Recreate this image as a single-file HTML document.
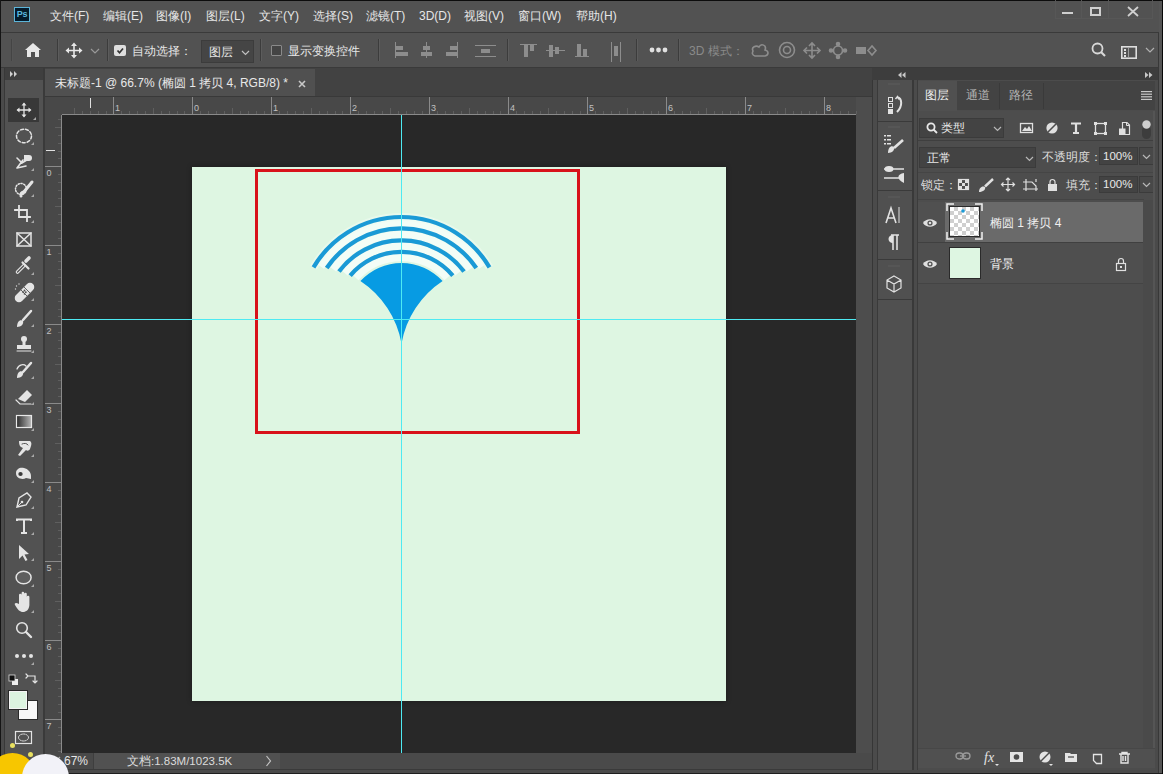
<!DOCTYPE html>
<html><head><meta charset="utf-8">
<style>
*{box-sizing:border-box;margin:0;padding:0}
html,body{width:1163px;height:774px;overflow:hidden;background:#3a3a3a;font-family:"Liberation Sans",sans-serif;color:#dcdcdc;font-size:12px}
.a{position:absolute}
.t{position:absolute;white-space:nowrap;line-height:14px}
#menubar{left:1px;top:1px;width:1158px;height:31px;background:#525252}
#menubar .t{top:8px;color:#e6e6e6}
#opts{left:1px;top:33px;width:1158px;height:34px;background:#525252}
#toolbar{left:5px;top:68px;width:38px;height:702px;background:#525252}
#tabbar{left:45px;top:68px;width:827px;height:29px;background:#424242}
#tab{left:45px;top:69px;width:270px;height:28px;background:#505050}
#hruler{left:45px;top:97px;width:811px;height:18px;background:#484848}
#vruler{left:45px;top:115px;width:17px;height:638px;background:#484848}
#paste{left:62px;top:115px;width:794px;height:638px;background:#282828}
#doc{left:192px;top:167px;width:534px;height:534px;background:#def6e2;box-shadow:0 0 5px rgba(0,0,0,0.35)}
#rstrip{left:856px;top:97px;width:16px;height:656px;background:#4d4d4d}
#status{left:45px;top:753px;width:827px;height:16px;background:#4a4a4a}
#iconpanel{left:873px;top:68px;width:41px;height:702px;background:#474747}
#layers{left:915px;top:68px;width:244px;height:702px;background:#4c4c4c}
.sep{position:absolute;top:6px;width:2px;height:22px;border-left:1px solid #3c3c3c;border-right:1px solid #5c5c5c}
svg{position:absolute;overflow:visible}
</style></head><body>
<div class="a" style="left:0;top:0;width:1163px;height:1px;background:#0c0c0c"></div>
<div class="a" style="left:0;top:0;width:1px;height:774px;background:#151515"></div>
<!-- MENU BAR -->
<div class="a" id="menubar">
  <div class="a" style="left:13px;top:6px;width:16px;height:15px;background:#041a2a;border:1px solid #5cb4d8;color:#5ab6de;font-size:9px;font-weight:bold;line-height:13px;text-align:center;letter-spacing:-0.3px">Ps</div>
  <span class="t" style="left:49px">文件(F)</span>
  <span class="t" style="left:102px">编辑(E)</span>
  <span class="t" style="left:155px">图像(I)</span>
  <span class="t" style="left:205px">图层(L)</span>
  <span class="t" style="left:258px">文字(Y)</span>
  <span class="t" style="left:312px">选择(S)</span>
  <span class="t" style="left:365px">滤镜(T)</span>
  <span class="t" style="left:418px">3D(D)</span>
  <span class="t" style="left:463px">视图(V)</span>
  <span class="t" style="left:517px">窗口(W)</span>
  <span class="t" style="left:575px">帮助(H)</span>
  <div class="a" style="left:1054px;top:-1px;width:27px;height:19px;border:1px solid #575757;border-top:none"></div>
  <div class="a" style="left:1080px;top:-1px;width:28px;height:19px;border:1px solid #575757;border-top:none"></div>
  <div class="a" style="left:1107px;top:-1px;width:45px;height:19px;border:1px solid #575757;border-top:none"></div>
  <div class="a" style="left:1061px;top:11px;width:11px;height:2px;background:#cfcfcf"></div>
  <div class="a" style="left:1089px;top:6px;width:11px;height:9px;border:2px solid #cfcfcf"></div>
  <svg style="left:1126px;top:5px" width="12" height="11"><path d="M1,1 L11,10 M11,1 L1,10" stroke="#d0d0d0" stroke-width="1.8"/></svg>
</div>
<!-- OPTIONS BAR -->
<div class="a" id="opts">
  <div class="sep" style="left:10px;border-left-color:#444;border-right-color:#555"></div>
  <svg style="left:23px;top:9px" width="18" height="16"><path d="M9,1 L1,8 L3,8 L3,15 L7,15 L7,10 L11,10 L11,15 L15,15 L15,8 L17,8 Z" fill="#e8e8e8"/></svg>
  <div class="sep" style="left:56px"></div>
  <svg style="left:64px;top:9px" width="18" height="17"><path d="M9,3 V14 M3,8.5 H15" stroke="#e8e8e8" stroke-width="1.6"/><path d="M9,0.5 L12,4 H6 Z M9,16.5 L12,13 H6 Z M0.5,8.5 L4,5.5 V11.5 Z M17.5,8.5 L14,5.5 V11.5 Z" fill="#e8e8e8"/></svg>
  <svg style="left:89px;top:15px" width="10" height="6"><path d="M1,1 L5,5 L9,1" stroke="#9a9a9a" stroke-width="1.2" fill="none"/></svg>
  <div class="sep" style="left:106px"></div>
  <div class="a" style="left:113px;top:12px;width:12px;height:11px;background:#dedede;border-radius:2px"></div>
  <svg style="left:114px;top:13px" width="10" height="9"><path d="M2.5,4.5 L4.5,6.8 L8,2.5" stroke="#333" stroke-width="1.7" fill="none"/></svg>
  <span class="t" style="left:131px;top:11px;color:#e6e6e6">自动选择：</span>
  <div class="a" style="left:200px;top:7px;width:53px;height:23px;background:#454545;border:1px solid #3c3c3c"></div>
  <span class="t" style="left:208px;top:12px;color:#e6e6e6">图层</span>
  <svg style="left:240px;top:17px" width="9" height="6"><path d="M1,1 L4.5,4.5 L8,1" stroke="#c0c0c0" stroke-width="1.2" fill="none"/></svg>
  <div class="sep" style="left:259px"></div>
  <div class="a" style="left:270px;top:12px;width:11px;height:11px;border:1px solid #8a8a8a;background:#444;border-radius:1px"></div>
  <span class="t" style="left:287px;top:11px;color:#e6e6e6">显示变换控件</span>
  <div class="sep" style="left:377px"></div>
  <!-- align icons -->
  <svg style="left:393px;top:8px" width="110" height="20" fill="#8d8d8d" stroke="none">
    <rect x="1" y="1" width="1" height="16"/><rect x="2" y="5" width="7" height="4"/><rect x="2" y="11" width="12" height="4"/>
    <rect x="32" y="1" width="1" height="16"/><rect x="29" y="5" width="7" height="4"/><rect x="27" y="11" width="11" height="4"/>
    <rect x="63" y="1" width="1" height="16"/><rect x="56" y="5" width="7" height="4"/><rect x="52" y="11" width="11" height="4"/>
    <rect x="81" y="4" width="21" height="1"/><rect x="81" y="15" width="21" height="1"/><rect x="87" y="8" width="9" height="4"/>
  </svg>
  <div class="sep" style="left:506px"></div>
  <svg style="left:518px;top:8px" width="110" height="22" fill="#8d8d8d">
    <rect x="1" y="3" width="17" height="1"/><rect x="5" y="4" width="4" height="12"/><rect x="11" y="4" width="4" height="6"/>
    <rect x="27" y="9" width="19" height="1"/><rect x="30" y="4" width="4" height="12"/><rect x="36" y="6" width="4" height="7"/>
    <rect x="56" y="15" width="14" height="1"/><rect x="58" y="3" width="4" height="12"/><rect x="64" y="8" width="4" height="7"/>
    <rect x="92" y="1" width="1" height="20"/><rect x="101" y="1" width="1" height="20"/><rect x="95" y="5" width="4" height="10"/>
  </svg>
  <div class="sep" style="left:635px"></div>
  <svg style="left:648px;top:14px" width="20" height="6" fill="#e0e0e0"><circle cx="3" cy="3" r="2.4"/><circle cx="9.5" cy="3" r="2.4"/><circle cx="16" cy="3" r="2.4"/></svg>
  <div class="sep" style="left:677px"></div>
  <span class="t" style="left:688px;top:11px;color:#8a8a8a">3D 模式：</span>
  <svg style="left:749px;top:9px" width="130" height="18" fill="none" stroke="#8d8d8d" stroke-width="1.6">
    <path d="M3,9 C1,5 6,3 9,5 C11,1 17,3 15,8 C19,9 19,13 15,14 L5,14 C2,13 2,11 3,9 Z"/>
    <circle cx="37" cy="8" r="7.5"/><circle cx="37" cy="8" r="3.5"/>
    <path d="M62,1 V16 M54,8.5 H70 M59,4 L62,1 L65,4 M59,13 L62,16 L65,13 M57,5.5 L54,8.5 L57,11.5 M67,5.5 L70,8.5 L67,11.5"/>
    <circle cx="88" cy="8.5" r="4.5"/><circle cx="88" cy="2" r="1.5" fill="#8d8d8d"/><circle cx="88" cy="15" r="1.5" fill="#8d8d8d"/><circle cx="81" cy="8.5" r="1.5" fill="#8d8d8d"/><circle cx="95" cy="8.5" r="1.5" fill="#8d8d8d"/>
    <rect x="106" y="5" width="10" height="7" fill="#8d8d8d" stroke="none"/><path d="M122,4 L118,8.5 L122,13 L126,8.5 Z"/>
  </svg>
  <svg style="left:1090px;top:9px" width="18" height="19" fill="none" stroke="#d8d8d8" stroke-width="1.8"><circle cx="6.5" cy="6.5" r="5"/><path d="M10,10 L14,14" stroke-width="2.2"/></svg>
  <svg style="left:1119px;top:12px" width="18" height="15"><rect x="1.8" y="1.8" width="14.4" height="11.4" fill="none" stroke="#dedede" stroke-width="1.6"/><rect x="4" y="4" width="2" height="2" fill="#dedede"/><rect x="4" y="7" width="2" height="2" fill="#dedede"/><rect x="4" y="10" width="2" height="2" fill="#dedede"/><rect x="8" y="3" width="1" height="9" fill="#9a9a9a"/></svg>
  <svg style="left:1144px;top:14px" width="10" height="6"><path d="M1,1 L5,5 L9,1" stroke="#b0b0b0" stroke-width="1.2" fill="none"/></svg>
</div>

<!-- TOOLBAR -->
<div class="a" style="left:1px;top:68px;width:3px;height:702px;background:#4a4a4a"></div><div class="a" style="left:4px;top:68px;width:1px;height:702px;background:#383838"></div>
<div class="a" id="toolbar"></div>
<div class="a" style="left:5px;top:68px;width:38px;height:12px;background:#3f3f3f"></div>
<svg style="left:10px;top:71px" width="10" height="6" fill="#d0d0d0"><path d="M0,0 L3,3 L0,6 Z M4,0 L7,3 L4,6 Z"/></svg>
<div class="a" style="left:8px;top:98px;width:31px;height:24px;background:#383838"></div>
<svg style="left:0;top:0" width="45" height="774" fill="none" stroke="#e4e4e4" stroke-width="1.5" stroke-linecap="round">
  <g fill="#a8a8a8" stroke="none">
    <path d="M36,117 L36,120 L33,120 Z"/><path d="M34,142 L34,145 L31,145 Z"/><path d="M34,168 L34,171 L31,171 Z"/>
    <path d="M34,194 L34,197 L31,197 Z"/><path d="M34,220 L34,223 L31,223 Z"/><path d="M34,272 L34,275 L31,275 Z"/>
    <path d="M34,298 L34,301 L31,301 Z"/><path d="M34,324 L34,327 L31,327 Z"/><path d="M34,350 L34,353 L31,353 Z"/>
    <path d="M34,376 L34,379 L31,379 Z"/><path d="M34,402 L34,405 L31,405 Z"/><path d="M34,428 L34,431 L31,431 Z"/>
    <path d="M34,454 L34,457 L31,457 Z"/><path d="M34,480 L34,483 L31,483 Z"/><path d="M34,506 L34,509 L31,509 Z"/>
    <path d="M34,532 L34,535 L31,535 Z"/><path d="M34,558 L34,561 L31,561 Z"/><path d="M34,584 L34,587 L31,587 Z"/>
    <path d="M34,610 L34,613 L31,613 Z"/><path d="M34,662 L34,665 L31,665 Z"/>
  </g>
  <!-- move -->
  <path d="M24,104 V116 M18,110 H30" stroke-width="1.3"/><path d="M24,102.5 L26.5,105.5 H21.5 Z M24,117.5 L26.5,114.5 H21.5 Z M16.5,110 L19.5,107.5 V112.5 Z M31.5,110 L28.5,107.5 V112.5 Z" fill="#e4e4e4" stroke="none"/>
  <!-- marquee -->
  <ellipse cx="24" cy="136" rx="7.5" ry="6.8" stroke-dasharray="3 2"/>
  <!-- lasso magnetic -->
  <path d="M17,168 L23,160 M17,168 L26,166 M17,158 L22,163 L30,158" stroke-width="1.6"/><path d="M24,155 h5 a3,3 0 0 1 0,6 h-5 z" fill="#e4e4e4" stroke="none"/>
  <!-- quick select -->
  <circle cx="21" cy="189" r="5.5" stroke-dasharray="1.2 1.6"/><path d="M23,193 L32,182" stroke-width="3"/><path d="M21,196 a3,3 0 0 1 3,-4" stroke-width="3"/>
  <!-- crop -->
  <path d="M19,206 V217 H30 M15,210 H27 V221" stroke-width="1.8" stroke-linecap="square"/>
  <!-- frame -->
  <rect x="17" y="233" width="14" height="13"/><path d="M17,233 L31,246 M31,233 L17,246"/>
  <!-- eyedropper -->
  <path d="M17.5,272 L24,265.5" stroke-width="3.6"/><path d="M17.5,272 L24,265.5" stroke="#525252" stroke-width="1.3"/><path d="M22.5,262.5 L28.5,268.5" stroke-width="2.2"/><path d="M26,261 L29,258" stroke-width="3.6"/>
  <!-- healing -->
  <path d="M16,295 L27,284 a4,4 0 0 1 6,6 L22,301 a4,4 0 0 1 -6,-6 z" fill="#e4e4e4" stroke="none"/>
  <path d="M19.5,288.5 L28.5,297.5 M22.5,285.5 L31.5,294.5" stroke="#525252" stroke-width="0.9"/>
  <g fill="#525252" stroke="none"><circle cx="23.2" cy="292.2" r="0.9"/><circle cx="25.8" cy="292.2" r="0.9"/><circle cx="24.5" cy="290.5" r="0.9"/><circle cx="24.5" cy="293.8" r="0.9"/></g>
  <g fill="#d8d8d8" stroke="none"><circle cx="16.5" cy="286" r="0.7"/><circle cx="19" cy="284" r="0.7"/><circle cx="15.5" cy="289" r="0.7"/></g>
  <!-- brush -->
  <path d="M23,320 L31,311" stroke-width="2.5"/><path d="M17,327 C17,322 20,319 23,321 C24,324 21,327 17,327 Z" fill="#e4e4e4" stroke="none"/>
  <!-- stamp -->
  <circle cx="24" cy="339" r="3" fill="#e4e4e4" stroke="none"/><rect x="22.5" y="341" width="3" height="4" fill="#e4e4e4" stroke="none"/><rect x="17" y="345" width="14" height="4" fill="#e4e4e4" stroke="none"/><path d="M17,351 H31" stroke-width="1"/>
  <!-- history brush -->
  <path d="M17,369 C19,364 24,364 26,366" stroke-width="1.3"/><path d="M23,372 L31,363" stroke-width="2.5"/><path d="M17,378 C17,373 20,370 23,372 C24,375 21,378 17,378 Z" fill="#e4e4e4" stroke="none"/>
  <!-- eraser -->
  <path d="M18,399 L27,390 L32,395 L25,402 Z" fill="#e4e4e4" stroke="none"/><path d="M16,400 L20,404 H31" stroke-width="1.2"/>
  <!-- gradient -->
  <defs><linearGradient id="gr" x1="0" x2="1"><stop offset="0" stop-color="#2a2a2a"/><stop offset="1" stop-color="#b8b8b8"/></linearGradient></defs>
  <rect x="16.5" y="415.5" width="15" height="12" fill="url(#gr)" stroke="#e8e8e8" stroke-width="1.2"/>
  <!-- blur -->
  <path d="M19,441 H29 C31,441 32,443 31,446 L30,449 C29,451 27,451 26,450 L20,456 L18,455 L23,448 C20,447 19,445 19,441 Z" fill="#e4e4e4" stroke="none"/>
  <path d="M22,444 C24,443 27,443 28,445" stroke="#525252" stroke-width="1"/>
  <!-- dodge -->
  <path d="M16,473 C16,469 20,467 24,468 C28,469 31,472 31,476 L31,479 L26,478 C23,480 16,479 16,473 Z" fill="#e4e4e4" stroke="none"/><ellipse cx="20.5" cy="474" rx="2.2" ry="2" fill="#3a3a3a" stroke="none"/>
  <!-- pen -->
  <path d="M17,507 L19,498 L27,493 L31,497 L26,505 Z" stroke-width="1.4"/><circle cx="22" cy="502" r="1.3" fill="#e4e4e4" stroke="none"/><path d="M17,507 L22,502" stroke-width="1"/>
  <!-- type -->
  <path d="M17,521 V519.5 H31 V521 M24,519.5 V533 M21,533 H27" stroke-width="2" stroke-linecap="butt"/>
  <!-- path select -->
  <path d="M19,545 L19,559 L22.5,555.5 L25.5,561 L27.5,560 L24.5,554.5 L29,554 Z" fill="#e4e4e4" stroke="none"/>
  <!-- ellipse -->
  <ellipse cx="23.6" cy="577.5" rx="7.5" ry="6.3" fill="#5e5e5e" stroke-width="1.5"/>
  <!-- hand -->
  <path d="M19,604 V595 a1.3,1.3 0 0 1 2.6,0 V601 V593 a1.3,1.3 0 0 1 2.6,0 V601 V594 a1.3,1.3 0 0 1 2.6,0 V602 V597 a1.3,1.3 0 0 1 2.6,0 V605 C29,610 26,612 23,612 C20,612 18,610 15,605 C14,603 16,602 19,604 Z" fill="#e4e4e4" stroke="none"/>
  <!-- zoom -->
  <circle cx="22" cy="628" r="5.3" stroke-width="1.6"/><path d="M26,632 L31,637" stroke-width="2.4"/>
  <!-- dots -->
  <g fill="#e4e4e4" stroke="none"><circle cx="17" cy="656" r="2"/><circle cx="24" cy="656" r="2"/><circle cx="31" cy="656" r="2"/></g>
  <!-- default colors -->
  <rect x="12" y="679" width="6" height="6" fill="#f0f0f0" stroke="none"/><rect x="9" y="675" width="6" height="6" fill="#111" stroke="#ddd" stroke-width="0.8"/>
  <path d="M28,676 H35 V683 M26,678 L28,676 L26,674 M33,681 L35,683 L37,681" stroke-width="1.2"/>
  <!-- fg/bg -->
  <rect x="18.5" y="700.5" width="19" height="19" fill="#f7f7f7" stroke="#2a2a2a" stroke-width="1"/>
  <rect x="8.5" y="690.5" width="19" height="19" fill="#dcf4e0" stroke="#2a2a2a" stroke-width="1"/>
  <rect x="9.5" y="691.5" width="17" height="17" fill="none" stroke="#f4f4f4" stroke-width="1"/>
  <!-- quick mask -->
  <rect x="15.5" y="731.5" width="16" height="12" stroke-width="1.2"/><ellipse cx="23.5" cy="737.5" rx="5" ry="3.5" stroke-dasharray="1 1.2" stroke-width="1"/>
</svg>

<!-- DOCUMENT TAB + RULERS -->
<div class="a" id="tabbar"></div>
<div class="a" id="tab"></div>
<span class="t" style="left:55px;top:76px;color:#e8e8e8;font-size:12px">未标题-1 @ 66.7% (椭圆 1 拷贝 4, RGB/8) *</span>
<svg style="left:298px;top:80px" width="8" height="8"><path d="M1,1 L7,7 M7,1 L1,7" stroke="#c8c8c8" stroke-width="1.6"/></svg>
<div class="a" id="hruler"></div>
<div class="a" style="left:45px;top:96px;width:827px;height:1px;background:#393939"></div>
<div class="a" id="vruler"></div>
<div class="a" id="paste"></div>
<div class="a" id="rstrip"></div>
<div class="a" id="status"></div>
<div class="a" id="doc"></div>

<svg style="left:0;top:0" width="1163" height="774" fill="#5f5f5f" font-family="Liberation Sans" font-size="9"><rect x="74" y="108" width="1" height="6"/><rect x="82" y="111" width="1" height="3"/><rect x="90" y="111" width="1" height="3"/><rect x="98" y="111" width="1" height="3"/><rect x="106" y="111" width="1" height="3"/><rect x="113" y="97" width="1" height="17" fill="#8a8a8a"/><text x="115" y="111" fill="#c0c0c0">1</text><rect x="121" y="111" width="1" height="3"/><rect x="129" y="111" width="1" height="3"/><rect x="137" y="111" width="1" height="3"/><rect x="145" y="111" width="1" height="3"/><rect x="153" y="108" width="1" height="6"/><rect x="161" y="111" width="1" height="3"/><rect x="169" y="111" width="1" height="3"/><rect x="177" y="111" width="1" height="3"/><rect x="184" y="111" width="1" height="3"/><rect x="192" y="97" width="1" height="17" fill="#8a8a8a"/><text x="194" y="111" fill="#c0c0c0">0</text><rect x="200" y="111" width="1" height="3"/><rect x="208" y="111" width="1" height="3"/><rect x="216" y="111" width="1" height="3"/><rect x="224" y="111" width="1" height="3"/><rect x="232" y="108" width="1" height="6"/><rect x="240" y="111" width="1" height="3"/><rect x="248" y="111" width="1" height="3"/><rect x="256" y="111" width="1" height="3"/><rect x="264" y="111" width="1" height="3"/><rect x="271" y="97" width="1" height="17" fill="#8a8a8a"/><text x="273" y="111" fill="#c0c0c0">1</text><rect x="279" y="111" width="1" height="3"/><rect x="287" y="111" width="1" height="3"/><rect x="295" y="111" width="1" height="3"/><rect x="303" y="111" width="1" height="3"/><rect x="311" y="108" width="1" height="6"/><rect x="319" y="111" width="1" height="3"/><rect x="327" y="111" width="1" height="3"/><rect x="335" y="111" width="1" height="3"/><rect x="342" y="111" width="1" height="3"/><rect x="350" y="97" width="1" height="17" fill="#8a8a8a"/><text x="352" y="111" fill="#c0c0c0">2</text><rect x="358" y="111" width="1" height="3"/><rect x="366" y="111" width="1" height="3"/><rect x="374" y="111" width="1" height="3"/><rect x="382" y="111" width="1" height="3"/><rect x="390" y="108" width="1" height="6"/><rect x="398" y="111" width="1" height="3"/><rect x="406" y="111" width="1" height="3"/><rect x="414" y="111" width="1" height="3"/><rect x="422" y="111" width="1" height="3"/><rect x="429" y="97" width="1" height="17" fill="#8a8a8a"/><text x="431" y="111" fill="#c0c0c0">3</text><rect x="437" y="111" width="1" height="3"/><rect x="445" y="111" width="1" height="3"/><rect x="453" y="111" width="1" height="3"/><rect x="461" y="111" width="1" height="3"/><rect x="469" y="108" width="1" height="6"/><rect x="477" y="111" width="1" height="3"/><rect x="485" y="111" width="1" height="3"/><rect x="493" y="111" width="1" height="3"/><rect x="500" y="111" width="1" height="3"/><rect x="508" y="97" width="1" height="17" fill="#8a8a8a"/><text x="510" y="111" fill="#c0c0c0">4</text><rect x="516" y="111" width="1" height="3"/><rect x="524" y="111" width="1" height="3"/><rect x="532" y="111" width="1" height="3"/><rect x="540" y="111" width="1" height="3"/><rect x="548" y="108" width="1" height="6"/><rect x="556" y="111" width="1" height="3"/><rect x="564" y="111" width="1" height="3"/><rect x="572" y="111" width="1" height="3"/><rect x="580" y="111" width="1" height="3"/><rect x="587" y="97" width="1" height="17" fill="#8a8a8a"/><text x="589" y="111" fill="#c0c0c0">5</text><rect x="595" y="111" width="1" height="3"/><rect x="603" y="111" width="1" height="3"/><rect x="611" y="111" width="1" height="3"/><rect x="619" y="111" width="1" height="3"/><rect x="627" y="108" width="1" height="6"/><rect x="635" y="111" width="1" height="3"/><rect x="643" y="111" width="1" height="3"/><rect x="651" y="111" width="1" height="3"/><rect x="658" y="111" width="1" height="3"/><rect x="666" y="97" width="1" height="17" fill="#8a8a8a"/><text x="668" y="111" fill="#c0c0c0">6</text><rect x="674" y="111" width="1" height="3"/><rect x="682" y="111" width="1" height="3"/><rect x="690" y="111" width="1" height="3"/><rect x="698" y="111" width="1" height="3"/><rect x="706" y="108" width="1" height="6"/><rect x="714" y="111" width="1" height="3"/><rect x="722" y="111" width="1" height="3"/><rect x="730" y="111" width="1" height="3"/><rect x="738" y="111" width="1" height="3"/><rect x="745" y="97" width="1" height="17" fill="#8a8a8a"/><text x="747" y="111" fill="#c0c0c0">7</text><rect x="753" y="111" width="1" height="3"/><rect x="761" y="111" width="1" height="3"/><rect x="769" y="111" width="1" height="3"/><rect x="777" y="111" width="1" height="3"/><rect x="785" y="108" width="1" height="6"/><rect x="793" y="111" width="1" height="3"/><rect x="801" y="111" width="1" height="3"/><rect x="809" y="111" width="1" height="3"/><rect x="816" y="111" width="1" height="3"/><rect x="824" y="97" width="1" height="17" fill="#8a8a8a"/><text x="826" y="111" fill="#c0c0c0">8</text><rect x="832" y="111" width="1" height="3"/><rect x="840" y="111" width="1" height="3"/><rect x="848" y="111" width="1" height="3"/><rect x="856" y="111" width="1" height="3"/><rect x="58" y="119" width="3" height="1"/><rect x="55" y="127" width="6" height="1"/><rect x="58" y="135" width="3" height="1"/><rect x="58" y="143" width="3" height="1"/><rect x="58" y="151" width="3" height="1"/><rect x="58" y="158" width="3" height="1"/><rect x="45" y="166" width="16" height="1" fill="#8a8a8a"/><text x="46.5" y="176" fill="#c0c0c0">0</text><rect x="58" y="174" width="3" height="1"/><rect x="58" y="182" width="3" height="1"/><rect x="58" y="190" width="3" height="1"/><rect x="58" y="198" width="3" height="1"/><rect x="55" y="206" width="6" height="1"/><rect x="58" y="214" width="3" height="1"/><rect x="58" y="222" width="3" height="1"/><rect x="58" y="230" width="3" height="1"/><rect x="58" y="238" width="3" height="1"/><rect x="45" y="245" width="16" height="1" fill="#8a8a8a"/><text x="46.5" y="255" fill="#c0c0c0">1</text><rect x="58" y="253" width="3" height="1"/><rect x="58" y="261" width="3" height="1"/><rect x="58" y="269" width="3" height="1"/><rect x="58" y="277" width="3" height="1"/><rect x="55" y="285" width="6" height="1"/><rect x="58" y="293" width="3" height="1"/><rect x="58" y="301" width="3" height="1"/><rect x="58" y="309" width="3" height="1"/><rect x="58" y="316" width="3" height="1"/><rect x="45" y="324" width="16" height="1" fill="#8a8a8a"/><text x="46.5" y="334" fill="#c0c0c0">2</text><rect x="58" y="332" width="3" height="1"/><rect x="58" y="340" width="3" height="1"/><rect x="58" y="348" width="3" height="1"/><rect x="58" y="356" width="3" height="1"/><rect x="55" y="364" width="6" height="1"/><rect x="58" y="372" width="3" height="1"/><rect x="58" y="380" width="3" height="1"/><rect x="58" y="388" width="3" height="1"/><rect x="58" y="396" width="3" height="1"/><rect x="45" y="403" width="16" height="1" fill="#8a8a8a"/><text x="46.5" y="413" fill="#c0c0c0">3</text><rect x="58" y="411" width="3" height="1"/><rect x="58" y="419" width="3" height="1"/><rect x="58" y="427" width="3" height="1"/><rect x="58" y="435" width="3" height="1"/><rect x="55" y="443" width="6" height="1"/><rect x="58" y="451" width="3" height="1"/><rect x="58" y="459" width="3" height="1"/><rect x="58" y="467" width="3" height="1"/><rect x="58" y="474" width="3" height="1"/><rect x="45" y="482" width="16" height="1" fill="#8a8a8a"/><text x="46.5" y="492" fill="#c0c0c0">4</text><rect x="58" y="490" width="3" height="1"/><rect x="58" y="498" width="3" height="1"/><rect x="58" y="506" width="3" height="1"/><rect x="58" y="514" width="3" height="1"/><rect x="55" y="522" width="6" height="1"/><rect x="58" y="530" width="3" height="1"/><rect x="58" y="538" width="3" height="1"/><rect x="58" y="546" width="3" height="1"/><rect x="58" y="554" width="3" height="1"/><rect x="45" y="561" width="16" height="1" fill="#8a8a8a"/><text x="46.5" y="571" fill="#c0c0c0">5</text><rect x="58" y="569" width="3" height="1"/><rect x="58" y="577" width="3" height="1"/><rect x="58" y="585" width="3" height="1"/><rect x="58" y="593" width="3" height="1"/><rect x="55" y="601" width="6" height="1"/><rect x="58" y="609" width="3" height="1"/><rect x="58" y="617" width="3" height="1"/><rect x="58" y="625" width="3" height="1"/><rect x="58" y="632" width="3" height="1"/><rect x="45" y="640" width="16" height="1" fill="#8a8a8a"/><text x="46.5" y="650" fill="#c0c0c0">6</text><rect x="58" y="648" width="3" height="1"/><rect x="58" y="656" width="3" height="1"/><rect x="58" y="664" width="3" height="1"/><rect x="58" y="672" width="3" height="1"/><rect x="55" y="680" width="6" height="1"/><rect x="58" y="688" width="3" height="1"/><rect x="58" y="696" width="3" height="1"/><rect x="58" y="704" width="3" height="1"/><rect x="58" y="712" width="3" height="1"/><rect x="45" y="719" width="16" height="1" fill="#8a8a8a"/><text x="46.5" y="729" fill="#c0c0c0">7</text><rect x="58" y="727" width="3" height="1"/><rect x="58" y="735" width="3" height="1"/><rect x="58" y="743" width="3" height="1"/><rect x="58" y="751" width="3" height="1"/><rect x="62" y="114" width="794" height="1" fill="#8a8a8a"/><rect x="61" y="115" width="1" height="638" fill="#8a8a8a"/></svg>
<svg style="left:0;top:0" width="1163" height="774">
  <rect x="256.5" y="170.5" width="322" height="262" fill="none" stroke="#d8121a" stroke-width="3"/>
  <g fill="none" stroke="#f3fdf6" stroke-width="7.5">
    <path d="M320.8,266.6 A96.2,96.2 0 0 1 482.2,266.6"/>
    <path d="M333.1,269.3 A84.5,84.5 0 0 1 469.9,269.3"/>
    <path d="M344.8,273.1 A72.9,72.9 0 0 1 458.2,273.1"/>
    <path d="M355.7,277.8 A61.6,61.6 0 0 1 447.3,277.8"/>
  </g>
  <g fill="none" stroke="#eefcf2" stroke-width="8" opacity="0.6">
    <path d="M313.5,267.4 A102,102 0 0 1 489.5,267.4"/>
  </g>
  <g fill="none" stroke="#1a9ad6" stroke-width="4.2">
    <path d="M313.5,267.4 A102,102 0 0 1 489.5,267.4"/>
    <path d="M326.7,268.0 A90.5,90.5 0 0 1 476.3,268.0"/>
    <path d="M339.0,271.4 A78.6,78.6 0 0 1 464.0,271.4"/>
    <path d="M350.2,275.6 A67.2,67.2 0 0 1 452.8,275.6"/>
  </g>
  <path d="M360.4,281 A56,56 0 0 1 442.6,281 A95,95 0 0 0 401.5,343.5 A95,95 0 0 0 360.4,281 Z" fill="#079be3"/>
  <rect x="401" y="115" width="1" height="638" fill="#4eeaf2"/>
  <rect x="62" y="319" width="794" height="1" fill="#4eeaf2"/>
  <rect x="90" y="98" width="1" height="10" fill="#e0e0e0"/>
  <rect x="46" y="150" width="9" height="1" fill="#e0e0e0"/>
</svg>
<!-- RIGHT PANELS -->
<div class="a" id="iconpanel"></div>
<div class="a" id="layers"></div>
<!-- icon strip -->
<div class="a" style="left:872px;top:68px;width:287px;height:12px;background:#3d3d3d"></div>
<svg style="left:898px;top:72px" width="8" height="6" fill="#c8c8c8"><path d="M3.5,0 L0,3 L3.5,6 Z M7.5,0 L4,3 L7.5,6 Z"/></svg>
<div class="a" style="left:872px;top:80px;width:1px;height:690px;background:#363636"></div>
<div class="a" style="left:873px;top:80px;width:4px;height:690px;background:#4b4b4b"></div>
<div class="a" style="left:877px;top:80px;width:1px;height:690px;background:#3a3a3a"></div>
<div class="a" style="left:878px;top:80px;width:34px;height:690px;background:#505050"></div>
<div class="a" style="left:912px;top:80px;width:2px;height:690px;background:#393939"></div>
<div class="a" style="left:914px;top:80px;width:3px;height:690px;background:#4b4b4b"></div>
<div class="a" style="left:917px;top:80px;width:1px;height:690px;background:#3c3c3c"></div>
<div class="a" style="left:878px;top:121px;width:34px;height:1px;background:#3a3a3a"></div>
<div class="a" style="left:878px;top:190px;width:34px;height:1px;background:#3a3a3a"></div>
<div class="a" style="left:878px;top:259px;width:34px;height:1px;background:#3a3a3a"></div>
<div class="a" style="left:878px;top:299px;width:34px;height:1px;background:#3a3a3a"></div>
<svg style="left:876px;top:80px" width="36" height="230" fill="none" stroke="#e2e2e2" stroke-width="1.3">
  <g stroke="#5c5c5c" stroke-width="1"><path d="M12,4 H24 M12,47 H24 M12,117 H24 M12,186 H24"/></g>
  <!-- history -->
  <rect x="12.5" y="17.5" width="4" height="4" stroke-width="1"/><rect x="12.5" y="23.5" width="4" height="4" stroke-width="1"/><rect x="12" y="29" width="5" height="5" fill="#e2e2e2" stroke="none"/>
  <path d="M19.5,19 L21.5,16.5 L23,19.5" stroke-width="1.4"/><path d="M21.5,17.5 C26,18 27,26 21,32" stroke-width="2"/>
  <!-- brush presets -->
  <g fill="#e2e2e2" stroke="none"><rect x="8" y="55" width="2" height="1.5"/><rect x="11" y="55" width="4" height="1.5"/><rect x="8" y="59" width="2" height="1.5"/><rect x="11" y="59" width="4" height="1.5"/><rect x="8" y="63" width="2" height="1.5"/><rect x="11" y="63" width="4" height="1.5"/></g>
  <path d="M18,68 L27,60" stroke-width="2.6"/><path d="M12,73 C12,68 15,65 18,67 C19,70 16,73 12,73 Z" fill="#e2e2e2" stroke="none"/>
  <!-- brush settings -->
  <g transform="translate(0,2)"><path d="M8,87 H28 M8,96 H26" stroke-width="1.3"/><ellipse cx="13" cy="87" rx="4.5" ry="3" fill="#e2e2e2" stroke="none"/><path d="M28,91 C21,92 20,97 28,101 Z" fill="#e2e2e2" stroke="none"/></g>
  <!-- character -->
  <path d="M10,143 L15,128 L20,143 M12,138 H18" stroke-width="1.6"/><path d="M23,127 V143" stroke-width="1"/>
  <!-- paragraph -->
  <path d="M17,155 V170 M21,155 V170 M15,155 H23" stroke-width="1.6"/><path d="M17,155 C11,155 11,163 17,163 Z" fill="#e2e2e2" stroke="none"/>
  <!-- 3d -->
  <path d="M18,196 L25,200 V208 L18,212 L11,208 V200 Z M11,200 L18,204 L25,200 M18,204 V212" stroke-width="1.2"/>
</svg>

<!-- layers panel -->

<svg style="left:1145px;top:72px" width="8" height="6" fill="#c8c8c8"><path d="M0,0 L3.5,3 L0,6 Z M4,0 L7.5,3 L4,6 Z"/></svg>
<div class="a" style="left:957px;top:81px;width:201px;height:29px;background:#434343"></div>
<div class="a" style="left:918px;top:81px;width:39px;height:30px;background:#505050"></div>
<div class="a" style="left:999px;top:83px;width:1px;height:26px;background:#3a3a3a"></div>
<div class="a" style="left:1043px;top:83px;width:1px;height:26px;background:#3a3a3a"></div>
<span class="t" style="left:925px;top:88px;color:#eeeeee">图层</span>
<span class="t" style="left:966px;top:88px;color:#b4b4b4">通道</span>
<span class="t" style="left:1009px;top:88px;color:#b4b4b4">路径</span>
<svg style="left:1141px;top:91px" width="11" height="9" fill="#c8c8c8"><rect y="0" width="11" height="1.2"/><rect y="2.6" width="11" height="1.2"/><rect y="5.2" width="11" height="1.2"/><rect y="7.8" width="11" height="1.2"/></svg>
<div class="a" style="left:918px;top:111px;width:240px;height:657px;background:#4d4d4d"></div>
<!-- filter row -->
<div class="a" style="left:919px;top:118px;width:85px;height:20px;background:#434343;border:1px solid #3b3b3b"></div>
<svg style="left:926px;top:122px" width="12" height="12" fill="none" stroke="#e8e8e8" stroke-width="1.8"><circle cx="5" cy="5" r="3.6"/><path d="M7.5,7.5 L11,11"/></svg>
<span class="t" style="left:941px;top:121px;color:#e8e8e8">类型</span>
<svg style="left:993px;top:126px" width="9" height="6"><path d="M1,1 L4.5,4.5 L8,1" stroke="#b8b8b8" stroke-width="1.2" fill="none"/></svg>
<svg style="left:1018px;top:120px" width="140" height="20" fill="none" stroke="#e0e0e0" stroke-width="1.3">
  <rect x="2.5" y="3.5" width="12" height="9"/><path d="M4,11 L7,7 L9,9 L11,6 L14,11 Z" fill="#e0e0e0" stroke="none"/>
  <circle cx="34" cy="8" r="5.6" fill="#e0e0e0" stroke="none"/><path d="M30,12 L38,4" stroke="#4d4d4d" stroke-width="1.6"/>
  <path d="M53,3.5 H63 M58,3.5 V13 M55,13 H61" stroke-width="2.2"/>
  <rect x="77.5" y="3.5" width="10" height="10"/><g fill="#e0e0e0" stroke="none"><rect x="76" y="2" width="3" height="3"/><rect x="86" y="2" width="3" height="3"/><rect x="76" y="12" width="3" height="3"/><rect x="86" y="12" width="3" height="3"/></g>
  <path d="M104.5,9 V2.5 H109 L111.5,5 V14.5 H107" stroke-width="1.2"/><path d="M108.5,2.5 V5.5 H111.5" stroke-width="1"/><rect x="101" y="8.5" width="6.5" height="6.5" fill="#e0e0e0" stroke="none"/>
  <rect x="124" y="6" width="9" height="13" rx="4.5" fill="#3d3d3d" stroke="none"/><circle cx="128.5" cy="4.5" r="4.2" fill="#cfcfcf" stroke="none"/>
</svg>
<div class="a" style="left:918px;top:140px;width:240px;height:1px;background:#3f3f3f"></div>
<!-- blend row -->
<div class="a" style="left:919px;top:147px;width:117px;height:21px;background:#434343;border:1px solid #3b3b3b"></div>
<span class="t" style="left:927px;top:151px;color:#e8e8e8">正常</span>
<svg style="left:1025px;top:156px" width="9" height="6"><path d="M1,1 L4.5,4.5 L8,1" stroke="#b8b8b8" stroke-width="1.2" fill="none"/></svg>
<span class="t" style="left:1042px;top:150px;color:#dcdcdc">不透明度：</span>
<div class="a" style="left:1099px;top:147px;width:39px;height:18px;background:#434343;border:1px solid #3b3b3b"></div>
<span class="t" style="left:1103px;top:149px;color:#e8e8e8;font-size:11.5px">100%</span>
<div class="a" style="left:1139px;top:147px;width:15px;height:18px;background:#484848;border:1px solid #3b3b3b"></div>
<svg style="left:1142px;top:154px" width="9" height="6"><path d="M1,1 L4.5,4.5 L8,1" stroke="#b8b8b8" stroke-width="1.2" fill="none"/></svg>
<div class="a" style="left:918px;top:172px;width:240px;height:1px;background:#454545"></div>
<!-- lock row -->
<span class="t" style="left:921px;top:178px;color:#dcdcdc">锁定：</span>
<svg style="left:956px;top:177px" width="110" height="16" fill="none" stroke="#e0e0e0" stroke-width="1.2">
  <rect x="2.5" y="2.5" width="10" height="10"/><g fill="#e0e0e0" stroke="none"><rect x="3" y="3" width="3" height="3"/><rect x="9" y="3" width="3" height="3"/><rect x="6" y="6" width="3" height="3"/><rect x="3" y="9" width="3" height="3"/><rect x="9" y="9" width="3" height="3"/></g>
  <path d="M29,9.5 L37,2" stroke-width="2.4"/><path d="M23,15 C23,11 26,8.5 29,10 C30,12.5 27,15 23,15 Z" fill="#e0e0e0" stroke="none"/>
  <path d="M52,1 V14 M45.5,7.5 H58.5 M50,3 L52,1 L54,3 M50,12 L52,14 L54,12 M47.5,5.5 L45.5,7.5 L47.5,9.5 M56.5,5.5 L58.5,7.5 L56.5,9.5"/>
  <path d="M70,2 V14 M67,5 H76 L80,9 V14 M67,12 H82 M80,2 V5"/>
  <rect x="92" y="7" width="9" height="7" fill="#e0e0e0" stroke="none"/><path d="M94,7 V5 a2.5,2.5 0 0 1 5,0 V7"/>
</svg>
<span class="t" style="left:1066px;top:178px;color:#dcdcdc">填充：</span>
<div class="a" style="left:1099px;top:176px;width:39px;height:17px;background:#434343;border:1px solid #3b3b3b"></div>
<span class="t" style="left:1103px;top:177px;color:#e8e8e8;font-size:11.5px">100%</span>
<div class="a" style="left:1139px;top:176px;width:15px;height:17px;background:#484848;border:1px solid #3b3b3b"></div>
<svg style="left:1142px;top:182px" width="9" height="6"><path d="M1,1 L4.5,4.5 L8,1" stroke="#b8b8b8" stroke-width="1.2" fill="none"/></svg>
<div class="a" style="left:918px;top:199px;width:226px;height:1px;background:#444"></div>
<!-- layer rows -->
<div class="a" style="left:918px;top:202px;width:27px;height:40px;background:#505050"></div>
<div class="a" style="left:945px;top:202px;width:198px;height:40px;background:#6a6a6a"></div>
<div class="a" style="left:918px;top:242px;width:225px;height:1px;background:#404040"></div>
<div class="a" style="left:918px;top:243px;width:225px;height:40px;background:#4f4f4f"></div>
<div class="a" style="left:918px;top:283px;width:225px;height:1px;background:#444"></div>
<svg style="left:922px;top:216px" width="16" height="60" fill="#e0e0e0">
  <path d="M1,7 C4,2 12,2 15,7 C12,12 4,12 1,7 Z"/><circle cx="8" cy="7" r="2.6" fill="#505050"/><circle cx="8" cy="7" r="1.3"/>
  <path d="M1,48 C4,43 12,43 15,48 C12,53 4,53 1,48 Z"/><circle cx="8" cy="48" r="2.6" fill="#505050"/><circle cx="8" cy="48" r="1.3"/>
</svg>
<div class="a" style="left:949px;top:206px;width:31px;height:31px;background-color:#fff;background-image:linear-gradient(45deg,#cfcfcf 25%,transparent 25%,transparent 75%,#cfcfcf 75%),linear-gradient(45deg,#cfcfcf 25%,transparent 25%,transparent 75%,#cfcfcf 75%);background-size:8px 8px;background-position:0 0,4px 4px;border:1px solid #2a2a2a"></div>
<svg style="left:946px;top:203px" width="37" height="37" fill="none" stroke="#f2f2f2" stroke-width="1.5"><path d="M1,8 V1 H8 M29,1 H36 V8 M36,29 V36 H29 M8,36 H1 V29"/><circle cx="17" cy="8" r="1.8" fill="#1a9ad6" stroke="none"/></svg>
<span class="t" style="left:990px;top:216px;color:#f0f0f0">椭圆 1 拷贝 4</span>
<div class="a" style="left:949px;top:247px;width:32px;height:32px;background:#def6e2;border:1px solid #2a2a2a"></div>
<span class="t" style="left:990px;top:257px;color:#f0f0f0">背景</span>
<svg style="left:1114px;top:256px" width="14" height="16" fill="none" stroke="#e0e0e0" stroke-width="1.2"><rect x="2.5" y="7.5" width="9" height="7"/><path d="M4.5,7.5 V5 a2.5,2.5 0 0 1 5,0 V7.5"/><rect x="6" y="10" width="2" height="2" fill="#e0e0e0" stroke="none"/></svg>
<div class="a" style="left:1143px;top:200px;width:10px;height:549px;background:#4a4a4a"></div>
<div class="a" style="left:1153px;top:111px;width:2px;height:657px;background:#555"></div>
<div class="a" style="left:1155px;top:80px;width:3px;height:690px;background:#4a4a4a"></div>
<div class="a" style="left:918px;top:748px;width:237px;height:1px;background:#474747"></div>
<div class="a" style="left:918px;top:749px;width:237px;height:19px;background:#505050"></div>
<!-- bottom icons -->
<svg style="left:952px;top:748px" width="182" height="20" fill="none" stroke="#e4e4e4" stroke-width="1.3">
  <g stroke="#9a9a9a"><rect x="4" y="5" width="7" height="6" rx="3"/><rect x="11" y="5" width="7" height="6" rx="3"/><path d="M8,8 H14"/></g>
  <text x="32" y="14" fill="#e4e4e4" stroke="none" font-family="Liberation Serif" font-style="italic" font-size="14">fx</text><path d="M43,16 L45,18 L47,16 Z" fill="#e4e4e4" stroke="none"/>
  <rect x="58" y="4" width="13" height="10" fill="#e4e4e4" stroke="none"/><circle cx="64.5" cy="9" r="2.8" fill="#4d4d4d" stroke="none"/>
  <circle cx="93" cy="9" r="5.5" fill="#e4e4e4" stroke="none"/><path d="M89,13 L97,5" stroke="#4d4d4d" stroke-width="1.5"/><path d="M97,16 L99,18 L101,16 Z" fill="#e4e4e4" stroke="none"/>
  <path d="M113,5 H118 L119,6 H125 V14 H113 Z" fill="#e4e4e4" stroke="none"/><path d="M116,9 H122" stroke="#4d4d4d"/>
  <path d="M141.5,6.5 H149.5 V15.5 H144.5 L141.5,12.5 Z" stroke-width="1.3"/>
  <path d="M167,6 H178 M169,6 V15 H176 V6 M171,8 V13 M173.5,8 V13 M170,6 V4.5 H175 V6" stroke-width="1.4"/>
</svg>
<!-- status bar -->
<div class="a" style="left:45px;top:753px;width:48px;height:16px;background:#494949"></div>
<div class="a" style="left:93px;top:753px;width:1px;height:16px;background:#3e3e3e"></div>
<div class="a" style="left:94px;top:753px;width:186px;height:16px;background:#515151"></div>
<div class="a" style="left:45px;top:769px;width:827px;height:1px;background:#3a3a3a"></div>
<div class="a" style="left:1px;top:770px;width:1158px;height:3px;background:#4a4a4a"></div>
<div class="a" style="left:0;top:773px;width:1163px;height:1px;background:#1e1e1e"></div>
<div class="a" style="left:1158px;top:33px;width:1px;height:740px;background:#383838"></div>
<div class="a" style="left:1159px;top:1px;width:3px;height:772px;background:#555"></div>
<div class="a" style="left:1162px;top:0;width:1px;height:774px;background:#080808"></div>
<span class="t" style="left:64px;top:754px;color:#e6e6e6;font-size:12px">67%</span>
<svg style="left:55px;top:756px" width="6" height="10"><path d="M5,1 L1,5 L5,9" stroke="#aaa" stroke-width="1.2" fill="none"/></svg>
<span class="t" style="left:127px;top:754px;color:#dcdcdc;font-size:11.5px">文档:1.83M/1023.5K</span>
<svg style="left:265px;top:755px" width="8" height="12"><path d="M1.5,1 L5.5,6 L1.5,11" stroke="#c4c4c4" stroke-width="1.2" fill="none"/></svg>
<!-- overlay circles -->
<div class="a" style="left:-11px;top:753px;width:47px;height:47px;border-radius:50%;background:#f7c600"></div>
<div class="a" style="left:22px;top:754px;width:47px;height:47px;border-radius:50%;background:#f2f2f8"></div>
<div class="a" style="left:10px;top:743px;width:5px;height:5px;border-radius:50%;background:#e8e060"></div>
<div class="a" style="left:28px;top:752px;width:5px;height:5px;border-radius:50%;background:#e8e060"></div>

</body></html>
